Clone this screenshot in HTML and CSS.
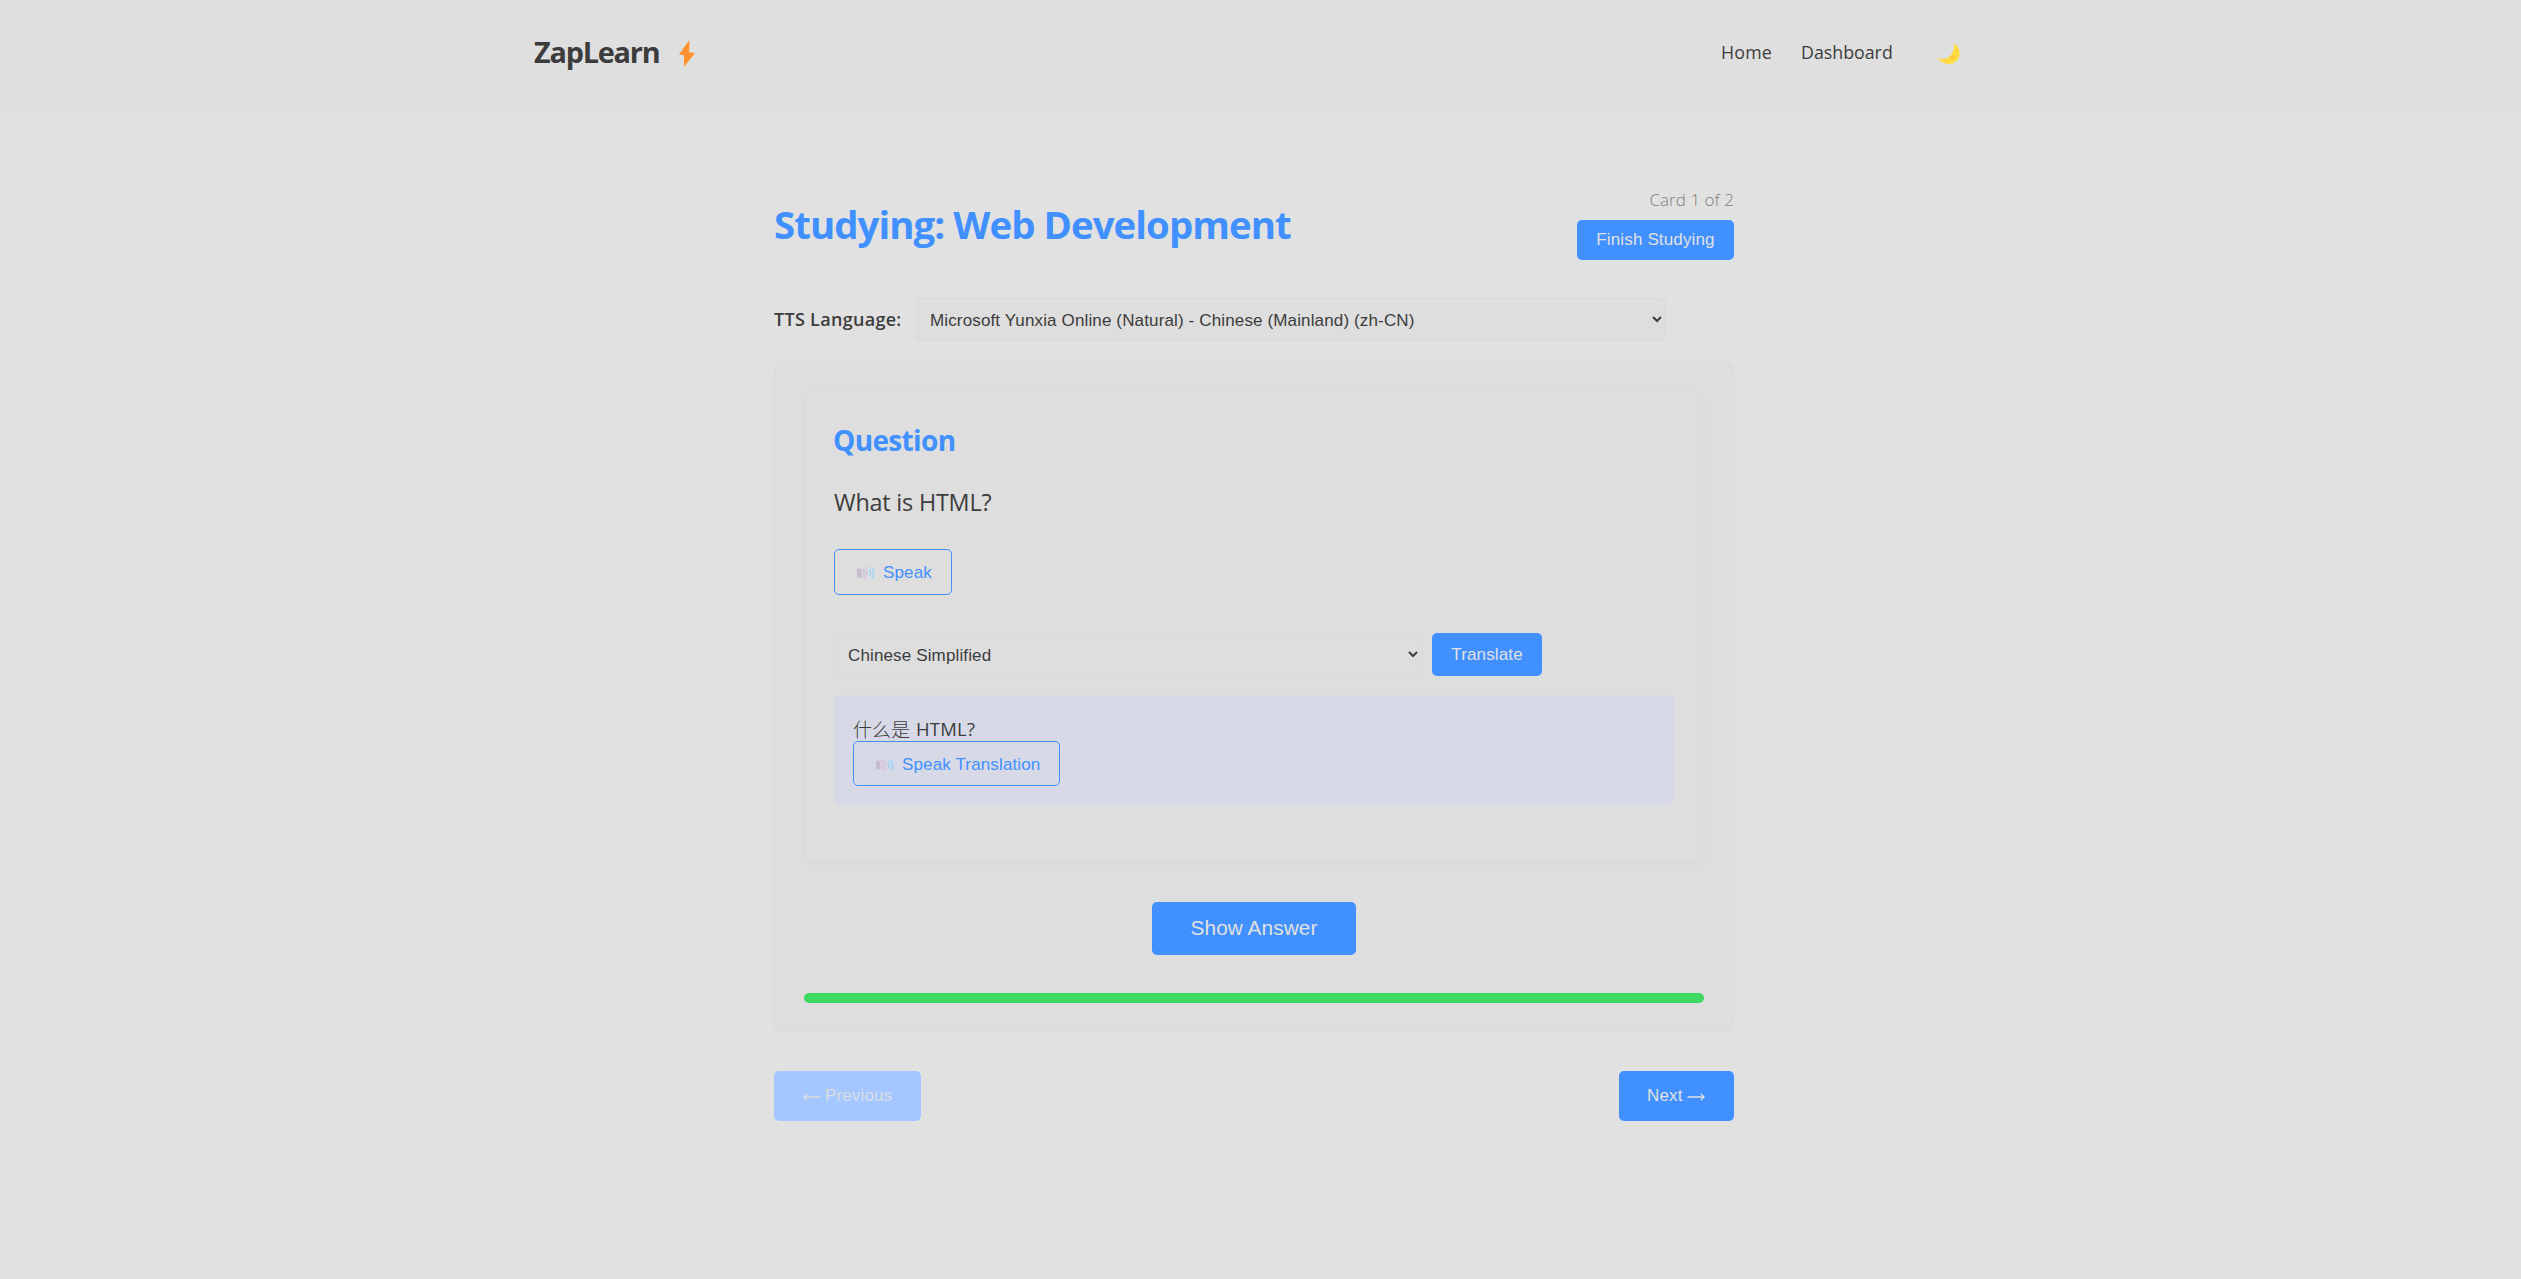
FILE: index.html
```html
<!DOCTYPE html>
<html lang="en">
<head>
<meta charset="utf-8">
<title>ZapLearn</title>
<link rel="stylesheet" href="styles.css">
</head>
<body>
<header class="site-header">
  <div class="header-inner">
    <div class="brand">
      <span class="brand-name">ZapLearn</span>
      <svg class="bolt" viewBox="0 0 16 27"><path d="M10.4 0L0 14.5L5 15.2V27L16 13L10.2 12.3Z" fill="#ff922f"/></svg>
    </div>
    <nav class="nav">
      <a class="nav-home">Home</a>
      <a class="nav-dash">Dashboard</a>
      <svg class="moon" viewBox="0 0 23 21"><path d="M16.8 .2C21 3 23 7 22.6 11.500C22 17 17.500 21 12 20.900C7.200 20.800 2.600 18.200 .3 14.700C4 16.500 9 16.400 12.600 13.400C16.200 10.300 17.600 5 16.800 .2Z" fill="#ffdf45"/><g fill="#ffca3d"><circle cx="15.700" cy="14.300" r="2.600"/><circle cx="8.300" cy="17.400" r="1.500"/><circle cx="19.500" cy="7" r="1.300"/><circle cx="19.900" cy="11.300" r="1"/><circle cx="12.500" cy="18.700" r=".8"/></g></svg>
    </nav>
  </div>
</header>
<main class="study">
  <div class="study-head">
    <h1 class="title">Studying: Web Development</h1>
    <div class="status">
      <div class="counter">Card 1 of 2</div>
      <button class="btn btn-finish">Finish Studying</button>
    </div>
  </div>
  <div class="tts">
    <label class="tts-label" for="voice">TTS Language:</label>
    <select class="select tts-select" id="voice"><option>Microsoft Yunxia Online (Natural) - Chinese (Mainland) (zh-CN)</option></select>
  </div>
  <section class="card">
    <div class="panel">
      <h2 class="panel-title">Question</h2>
      <p class="question">What is HTML?</p>
      <button class="btn-outline btn-speak">
        <svg class="speaker" viewBox="0 0 18 14"><path d="M0 2.700H4.500V11.300H0Z" fill="#c5bdcd"/><path d="M4 2.700L10 .3V13.700L4 11.300Z" fill="#d6cddd"/><path d="M10 5.200Q12 7 10 8.800Z" fill="#bdb3c8"/><path d="M12.300 3.700Q14.700 7 12.300 10.300M14.600 1.500Q18.600 7 14.600 12.500" fill="none" stroke="#8fd0fa" stroke-width="1.200"/></svg>
        <span>Speak</span>
      </button>
      <div class="translate">
        <select class="select lang-select" aria-label="Translation language"><option>Chinese Simplified</option></select>
        <button class="btn btn-translate">Translate</button>
      </div>
      <div class="result">
        <div class="result-text" lang="zh-CN"><span class="han">什么是</span> <span class="latin">HTML?</span></div>
        <button class="btn-outline btn-speak-tr">
          <svg class="speaker" viewBox="0 0 18 14"><path d="M0 2.700H4.500V11.300H0Z" fill="#c5bdcd"/><path d="M4 2.700L10 .3V13.700L4 11.300Z" fill="#d6cddd"/><path d="M10 5.200Q12 7 10 8.800Z" fill="#bdb3c8"/><path d="M12.300 3.700Q14.700 7 12.300 10.300M14.600 1.500Q18.600 7 14.600 12.500" fill="none" stroke="#8fd0fa" stroke-width="1.200"/></svg>
          <span>Speak Translation</span>
        </button>
      </div>
    </div>
    <button class="btn btn-show">Show Answer</button>
    <div class="progress"></div>
  </section>
  <div class="pager">
    <button class="btn btn-page" disabled><svg class="arrow" viewBox="0 0 18 8"><path d="M17.500 4H1M4.200 .8L1 4L4.200 7.200" fill="none" stroke="currentColor" stroke-width="1.300"/></svg><span>Previous</span></button>
    <button class="btn btn-page btn-next"><span>Next</span><svg class="arrow" viewBox="0 0 18 8"><path d="M.5 4H17M13.800 .8L17 4L13.800 7.200" fill="none" stroke="currentColor" stroke-width="1.300"/></svg></button>
  </div>
</main>
</body>
</html>
```
FILE: styles.css
```css
* { box-sizing: border-box; }

body {
  margin: 0;
  min-height: 1279px;
  background: #e1e1e1;
  color: #3c3c3c;
  font-family: "Open Sans", "Noto Sans CJK SC", sans-serif;
}

h1, h2, p { margin: 0; }

svg { flex: none; display: block; }

/* Header */
.site-header {
  height: 112px;
  padding-right: 13px;
  background: #dfdfdf;
  box-shadow: 0 2px 6px rgba(0, 0, 0, .01);
}

.header-inner {
  display: flex;
  justify-content: space-between;
  align-items: center;
  width: 1440px;
  height: 106px;
  margin: 0 auto;
}

.brand { display: flex; align-items: center; }

.brand-name {
  width: 145px;
  padding-bottom: 3px;
  font-size: 28.8px;
  font-weight: 700;
  letter-spacing: -1.2px;
}

.bolt { width: 16px; height: 27px; }

.nav {
  display: flex;
  align-items: center;
  padding-right: 14px;
  font-size: 17.8px;
  font-weight: 400;
}

.nav-home, .nav-dash { padding-bottom: 3px; }
.nav-home { width: 80px; letter-spacing: .2px; }
.nav-dash { width: 136px; letter-spacing: 0; }
.moon { width: 23px; height: 21px; }

.study {
  width: 973px;
  margin: 0 auto;
  padding: 76px 13px 0 0;
}

.study-head {
  display: flex;
  justify-content: space-between;
  height: 110px;
}

.title {
  padding-top: 10px;
  color: #4090ff;
  font-size: 38.4px;
  line-height: 52px;
  letter-spacing: -.95px;
}

.status {
  display: flex;
  flex-direction: column;
  align-items: flex-end;
}

.counter {
  height: 32px;
  color: #7e7e7e;
  font-size: 17px;
  font-weight: 300;
  line-height: 24px;
  letter-spacing: .05px;
}

.btn, .btn-outline, .select {
  font-family: "Liberation Sans", Arial, sans-serif;
  font-size: 17px;
  letter-spacing: .14px;
  border-radius: 5px;
  white-space: nowrap;
}

.btn {
  display: block;
  padding: 0;
  border: 0;
  background: #4090ff;
  color: #e1e1e1;
}

.btn-finish {
  width: 157px;
  height: 40px;
  padding-bottom: 1px;
}

.tts { display: flex; align-items: center; height: 43px; }

.tts-label {
  width: 142px;
  padding-bottom: 2px;
  font-size: 18px;
  font-weight: 600;
  letter-spacing: .3px;
}

.select {
  height: 43px;
  padding: 2px 10px 0 9px;
  border: 1px solid #dadada;
  background: #dedede;
  color: #3c3c3c;
}

.tts-select { width: 750px; }

.card {
  height: 671px;
  margin-top: 20px;
  padding: 28px 29px;
  border: 1px solid #dadada;
  border-radius: 10px;
  background: #dedede;
  box-shadow: 0 2px 10px rgba(0, 0, 0, .015);
}

.panel {
  height: 473px;
  padding: 29px;
  border: 1px solid #dadada;
  border-radius: 10px;
  background: #dedede;
  box-shadow: 0 5px 12px rgba(0, 0, 0, .02);
}

.panel-title {
  margin: -1px 0 0 -1px;
  color: #4090ff;
  font-size: 28px;
  line-height: 42px;
  letter-spacing: -.65px;
}

.question {
  margin-top: 23px;
  font-size: 23.4px;
  letter-spacing: -.2px;
  line-height: 36px;
}

.btn-outline {
  display: flex;
  align-items: center;
  padding: 0;
  border: 1px solid #4090ff;
  background: transparent;
  color: #4090ff;
}

.speaker { width: 18px; height: 14px; margin-right: 8px; }

.btn-speak {
  width: 118px;
  height: 46px;
  margin-top: 29px;
  padding: 2px 0 0 22px;
}

.translate { display: flex; gap: 10px; margin-top: 38px; }

.lang-select { width: 588px; }
.btn-translate { width: 110px; height: 43px; }

.result {
  width: 840px;
  height: 110px;
  margin-top: 19px;
  padding: 19px;
  border-radius: 5px;
  background: #d7dae6;
}

.result-text { display: flex; gap: 6px; height: 27px; line-height: 27px; }
.han { font: 300 19px/29px "Noto Sans CJK SC", sans-serif; }
.latin { font-size: 18.5px; letter-spacing: .2px; line-height: 29px; }

.btn-speak-tr { width: 207px; height: 45px; padding: 2px 0 0 22px; }

.btn-show {
  width: 204px;
  height: 53px;
  margin: 39px auto 0;
  padding-bottom: 2px;
  font-size: 20.8px;
  letter-spacing: .08px;
}

.progress {
  height: 10px;
  margin-top: 38px;
  border-radius: 5px;
  background: #3dd963;
}

.pager { display: flex; justify-content: space-between; margin-top: 39px; }

.btn-page {
  display: flex;
  align-items: center;
  gap: 4px;
  width: 147px;
  height: 50px;
  padding: 0 0 1px 29px;
  letter-spacing: .14px;
}

.btn-page:disabled { background: #a4c7ff; color: #dadde3; }
.btn-next { width: 115px; padding-left: 28px; }
.arrow { width: 18px; height: 8px; margin-top: 2px; }
```
